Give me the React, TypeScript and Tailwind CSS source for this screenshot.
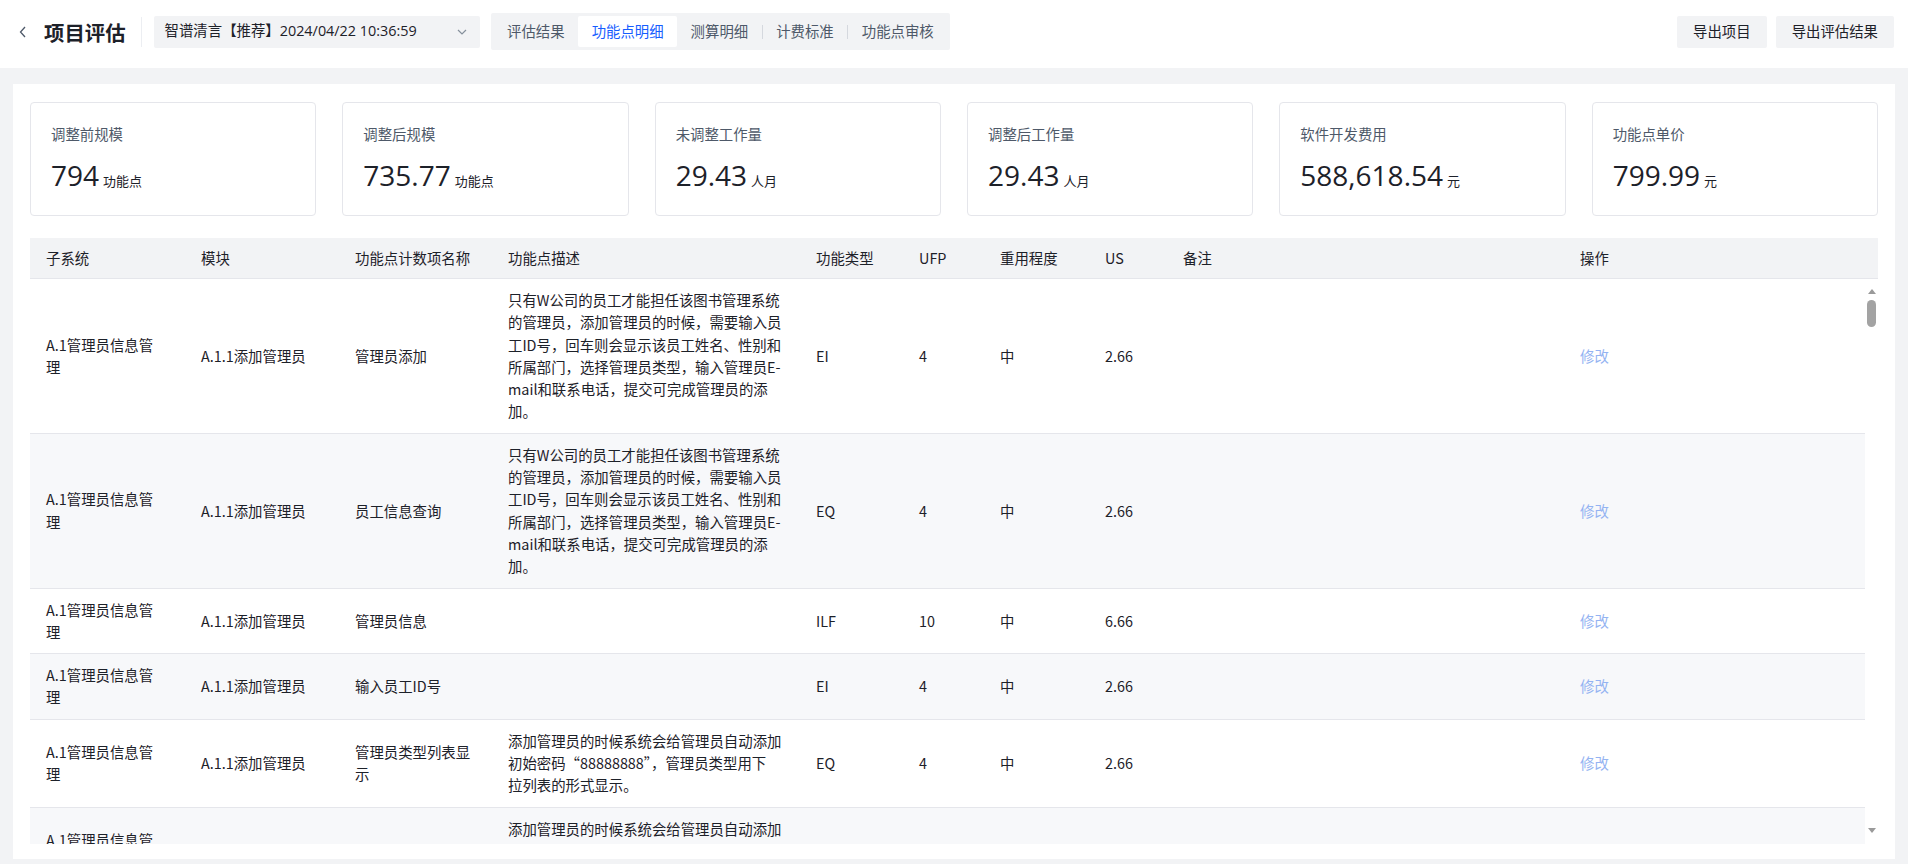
import React from "react";

const d1 = [
  "只有W公司的员工才能担任该图书管理系统",
  "的管理员，添加管理员的时候，需要输入员",
  "工ID号，回车则会显示该员工姓名、性别和",
  "所属部门，选择管理员类型，输入管理员E-",
  "mail和联系电话，提交可完成管理员的添",
  "加。",
];
const d2 = [
  "添加管理员的时候系统会给管理员自动添加",
  "初始密码“88888888”，管理员类型用下",
  "拉列表的形式显示。",
];

type Row = {
  sub: string[];
  mod: string[];
  name: string[];
  desc: string[];
  type: string;
  ufp: string;
  reuse: string;
  us: string;
};

const sub = ["A.1管理员信息管", "理"];
const rows: Row[] = [
  { sub, mod: ["A.1.1添加管理员"], name: ["管理员添加"], desc: d1, type: "EI", ufp: "4", reuse: "中", us: "2.66" },
  { sub, mod: ["A.1.1添加管理员"], name: ["员工信息查询"], desc: d1, type: "EQ", ufp: "4", reuse: "中", us: "2.66" },
  { sub, mod: ["A.1.1添加管理员"], name: ["管理员信息"], desc: [], type: "ILF", ufp: "10", reuse: "中", us: "6.66" },
  { sub, mod: ["A.1.1添加管理员"], name: ["输入员工ID号"], desc: [], type: "EI", ufp: "4", reuse: "中", us: "2.66" },
  { sub, mod: ["A.1.1添加管理员"], name: ["管理员类型列表显", "示"], desc: d2, type: "EQ", ufp: "4", reuse: "中", us: "2.66" },
  { sub, mod: ["A.1.1添加管理员"], name: ["初始密码设置"], desc: d2, type: "EI", ufp: "4", reuse: "中", us: "2.66" },
];

const cards = [
  { label: "调整前规模", value: "794", unit: "功能点" },
  { label: "调整后规模", value: "735.77", unit: "功能点" },
  { label: "未调整工作量", value: "29.43", unit: "人月" },
  { label: "调整后工作量", value: "29.43", unit: "人月" },
  { label: "软件开发费用", value: "588,618.54", unit: "元" },
  { label: "功能点单价", value: "799.99", unit: "元" },
];

const tabs = ["评估结果", "功能点明细", "测算明细", "计费标准", "功能点审核"];
const activeTab = 1;

const cols =
  "grid grid-cols-[155px_154px_153px_308px_103px_81px_105px_78px_397px_1fr]";

function Lines({ lines }: { lines: string[] }) {
  return (
    <>
      {lines.map((l, i) => (
        <div key={i} className="whitespace-nowrap">
          {l}
        </div>
      ))}
    </>
  );
}

function Cell({ children }: { children?: React.ReactNode }) {
  return (
    <div className="flex flex-col justify-center px-4 py-[10px] min-w-0">
      {children}
    </div>
  );
}

export default function App() {
  return (
    <div
      className="w-[1908px] h-[864px] overflow-hidden bg-[#f2f3f5] text-[#1d2129] text-[14.4px] leading-[22.3px]"
      style={{ fontFamily: '"Noto Sans CJK SC", "Noto Sans", sans-serif' }}
    >
      {/* Header */}
      <div className="h-[68px] bg-white flex items-center pb-[5px] pl-[18px] pr-[14px]">
        <svg width="10" height="14" viewBox="0 0 10 14" className="shrink-0">
          <polyline points="7,2 2.5,7 7,12" fill="none" stroke="#4e5969" strokeWidth="1.3" />
        </svg>
        <div className="ml-[16px] text-[20.4px] font-bold leading-[28px] text-[#1d2129]">项目评估</div>
        <div className="ml-[15px] w-px h-[30px] bg-[#eceef2]" />
        <div className="ml-[12px] w-[326px] h-[32px] bg-[#f2f3f5] rounded-[2px] flex items-center pl-[11px] pr-[13px]">
          <span
            className="flex-1 whitespace-nowrap text-[#1d2129]"
            style={{ fontFamily: '"Open Sans", "Noto Sans CJK SC", sans-serif' }}
          >
            智谱清言【推荐】2024/04/22 10:36:59
          </span>
          <svg width="10" height="6" viewBox="0 0 10 6">
            <polyline points="1,1 5,5 9,1" fill="none" stroke="#86909c" strokeWidth="1.2" />
          </svg>
        </div>
        <div className="ml-[11px] h-[37px] bg-[#f2f3f5] rounded-[2px] p-[3px] flex items-center">
          {tabs.map((t, i) => {
            const showSep = i > 0 && i !== activeTab && i - 1 !== activeTab;
            return (
              <React.Fragment key={t}>
                {showSep && <div className="w-px h-[14px] bg-[#d5d8de]" />}
                <div
                  className={
                    i === activeTab
                      ? "h-[31px] px-[13.5px] flex items-center bg-white text-[#165dff] rounded-[2px] whitespace-nowrap"
                      : "h-[31px] px-[13.5px] flex items-center text-[#4e5969] whitespace-nowrap"
                  }
                >
                  {t}
                </div>
              </React.Fragment>
            );
          })}
        </div>
        <div className="flex-1" />
        <div className="h-[32px] px-4 flex items-center bg-[#f2f3f5] rounded-[2px] text-[#1d2129] whitespace-nowrap">导出项目</div>
        <div className="ml-[9px] h-[32px] px-4 flex items-center bg-[#f2f3f5] rounded-[2px] text-[#1d2129] whitespace-nowrap">导出评估结果</div>
      </div>

      {/* Content */}
      <div className="px-[13px] pt-[16px]">
        <div className="h-[775px] bg-white flex flex-col pt-[18px] px-[17px] pb-[15px]">
          {/* Cards */}
          <div className="grid grid-cols-6 gap-[26px] shrink-0">
            {cards.map((c) => (
              <div key={c.label} className="h-[114px] border border-[#e5e6eb] rounded-[4px] pt-[21px] pl-[20px]">
                <div className="text-[#4e5969] leading-[20px]">{c.label}</div>
                <div className="mt-[12px] flex items-baseline">
                  <span
                    className="text-[28px] leading-[38px] text-[#1d2129]"
                    style={{ fontFamily: '"Open Sans", "Noto Sans", sans-serif' }}
                  >
                    {c.value}
                  </span>
                  <span className="ml-[4px] text-[13px] text-[#1d2129]">{c.unit}</span>
                </div>
              </div>
            ))}
          </div>

          {/* Table */}
          <div className="mt-[22px] flex-1 flex flex-col min-h-0">
            <div className={`${cols} h-[41px] bg-[#f2f3f5] border-b border-[#e5e6eb] shrink-0 items-center text-[#1d2129]`}>
              {["子系统", "模块", "功能点计数项名称", "功能点描述", "功能类型", "UFP", "重用程度", "US", "备注", "操作"].map((h) => (
                <div key={h} className="px-4 whitespace-nowrap">{h}</div>
              ))}
            </div>
            <div className="flex-1 flex min-h-0">
              <div className="flex-1 overflow-hidden">
                {rows.map((r, i) => (
                  <div
                    key={i}
                    className={`${cols} border-b border-[#e5e6eb] ${i % 2 === 1 ? "bg-[#f7f8fa]" : "bg-white"}`}
                  >
                    <Cell><Lines lines={r.sub} /></Cell>
                    <Cell><Lines lines={r.mod} /></Cell>
                    <Cell><Lines lines={r.name} /></Cell>
                    <Cell><Lines lines={r.desc} /></Cell>
                    <Cell>{r.type}</Cell>
                    <Cell>{r.ufp}</Cell>
                    <Cell>{r.reuse}</Cell>
                    <Cell>{r.us}</Cell>
                    <Cell />
                    <Cell><span className="text-[#94b3f2]">修改</span></Cell>
                  </div>
                ))}
              </div>
              <div className="w-[13px] shrink-0 flex flex-col items-center">
                <svg width="8" height="5" viewBox="0 0 8 5" className="mt-[10px]">
                  <polygon points="4,0 8,5 0,5" fill="#9a9a9a" />
                </svg>
                <div className="mt-[6px] w-[9px] h-[27px] rounded-full bg-[#a3a3a3]" />
                <div className="flex-1" />
                <svg width="8" height="5" viewBox="0 0 8 5" className="mb-[11px]">
                  <polygon points="0,0 8,0 4,5" fill="#9a9a9a" />
                </svg>
              </div>
            </div>
          </div>
        </div>
      </div>
    </div>
  );
}
